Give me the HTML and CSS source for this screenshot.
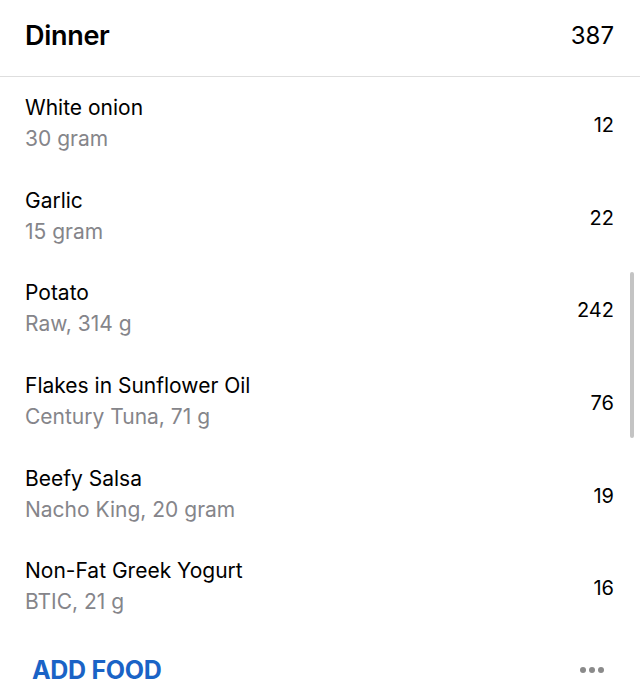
FILE: index.html
```html
<!DOCTYPE html>
<html lang="en">
<head>
  <meta charset="UTF-8">
  <meta name="viewport" content="width=device-width, initial-scale=1.0">
  <title>Dinner</title>
  <link rel="stylesheet" href="styles.css">
</head>
<body>
  <div class="meal">
    <header class="meal-head">
      <div class="meal-title">Dinner</div>
      <div class="meal-total">387</div>
    </header>
    <ul class="foods">
      <li class="food">
        <div class="food-info">
          <div class="food-name">White onion</div>
          <div class="food-desc">30 gram</div>
        </div>
        <div class="food-cal">12</div>
      </li>
      <li class="food">
        <div class="food-info">
          <div class="food-name">Garlic</div>
          <div class="food-desc">15 gram</div>
        </div>
        <div class="food-cal">22</div>
      </li>
      <li class="food">
        <div class="food-info">
          <div class="food-name">Potato</div>
          <div class="food-desc">Raw, 314 g</div>
        </div>
        <div class="food-cal">242</div>
      </li>
      <li class="food">
        <div class="food-info">
          <div class="food-name">Flakes in Sunflower Oil</div>
          <div class="food-desc">Century Tuna, 71 g</div>
        </div>
        <div class="food-cal">76</div>
      </li>
      <li class="food">
        <div class="food-info">
          <div class="food-name">Beefy Salsa</div>
          <div class="food-desc">Nacho King, 20 gram</div>
        </div>
        <div class="food-cal">19</div>
      </li>
      <li class="food">
        <div class="food-info">
          <div class="food-name">Non-Fat Greek Yogurt</div>
          <div class="food-desc">BTIC, 21 g</div>
        </div>
        <div class="food-cal">16</div>
      </li>
    </ul>
    <footer class="meal-foot">
      <a class="add-food" href="#">ADD FOOD</a>
      <span class="more"><i></i><i></i><i></i></span>
    </footer>
    <div class="scrollbar"></div>
  </div>
</body>
</html>
```

FILE: styles.css
```css
body {
  margin: 0;
  background: #fff;
  color: #000;
  font-family: Inter, "Liberation Sans", Arial, sans-serif;
}

.meal {
  position: relative;
  width: 640px;
  height: 694px;
  overflow: hidden;
}

.meal-head {
  display: flex;
  align-items: center;
  justify-content: space-between;
  height: 70px;
  padding: 0 26px 6px 25px;
  border-bottom: 1px solid #dedede;
}
.meal-title {
  font-size: 27px;
  font-weight: 600;
  letter-spacing: -0.3px;
}
.meal-total {
  font-size: 24px;
}

.foods {
  list-style: none;
  margin: 0;
  padding: 0;
}
.food {
  display: flex;
  align-items: center;
  justify-content: space-between;
  height: 92.6px;
  padding: 0 26px 0 25px;
  box-sizing: border-box;
}
.food-info {
  display: flex;
  flex-direction: column;
}
.food-name {
  font-size: 21px;
  line-height: 31px;
}
.food-desc {
  font-size: 21px;
  line-height: 31px;
  color: #85858a;
}
.food-cal {
  font-size: 20px;
  margin-top: 4px;
}

.meal-foot {
  display: flex;
  align-items: center;
  justify-content: space-between;
  height: 74px;
  padding: 0 36px 0 32px;
}
.add-food {
  color: #1a63c6;
  font-size: 25px;
  font-weight: 700;
  letter-spacing: -0.3px;
  text-decoration: none;
}
.more {
  display: flex;
  gap: 3px;
}
.more i {
  width: 6px;
  height: 6px;
  border-radius: 50%;
  background: #8a8a8a;
}

.scrollbar {
  position: absolute;
  left: 630px;
  top: 272px;
  width: 4px;
  height: 166px;
  border-radius: 2px;
  background: #c4c4c4;
}
```
